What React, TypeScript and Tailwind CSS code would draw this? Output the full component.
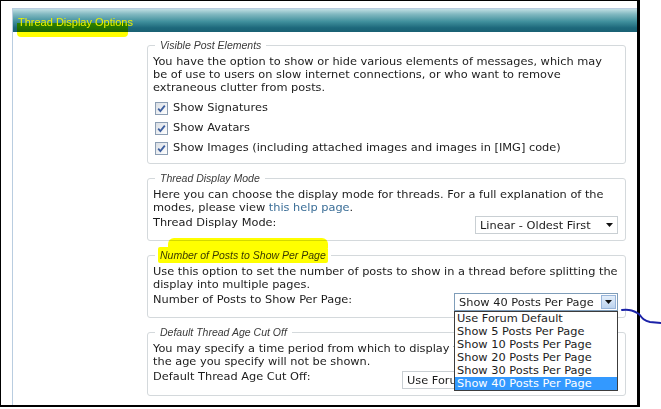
import type { ReactNode } from "react";

// ── Small pieces ──────────────────────────────────────────────────────────────

function Checkbox() {
  return (
    <span className="flex h-[13px] w-[13px] shrink-0 items-center justify-center border border-[#8b9db3] bg-gradient-to-br from-[#d9dee5] to-white">
      <svg width="9" height="9" viewBox="0 0 9 9">
        <path d="M1.2 4.6 L3.4 7 L7.8 1.6" fill="none" stroke="#3d5f9f" strokeWidth="1.8" />
      </svg>
    </span>
  );
}

function Arrow() {
  return (
    <svg width="7" height="4" viewBox="0 0 7 4">
      <path d="M0 0 H7 L3.5 4 Z" fill="#111" />
    </svg>
  );
}

function Legend({ children }: { children: ReactNode }) {
  return (
    <legend className="ml-[2px] px-[5px] font-['Liberation_Sans',Arial,sans-serif] text-[10.5px] italic leading-[14px] text-[#3a3a3a]">
      {children}
    </legend>
  );
}

function Fieldset({ legend, children }: { legend: string; children: ReactNode }) {
  return (
    <fieldset className="mb-[7px] rounded-[3px] border border-[#d4d9dc] px-[5px] pb-[6px]">
      <Legend>{legend}</Legend>
      {children}
    </fieldset>
  );
}

function Row({ label, children }: { label: string; children: ReactNode }) {
  return (
    <div className="mt-[2px] flex items-start justify-between pr-[2px]">
      <span className="leading-[13px]">{label}</span>
      {children}
    </div>
  );
}

const OPTIONS = [
  "Use Forum Default",
  "Show 5 Posts Per Page",
  "Show 10 Posts Per Page",
  "Show 20 Posts Per Page",
  "Show 30 Posts Per Page",
  "Show 40 Posts Per Page",
];

// ── Page ──────────────────────────────────────────────────────────────────────

export default function App() {
  return (
    <div className="relative h-[409px] w-[661px] overflow-hidden bg-white font-['DejaVu_Sans',Verdana,sans-serif] text-[11.35px] text-[#1c1c1c]">
      {/* black frame round the captured window */}
      <div className="h-[407px] w-[640px] overflow-hidden border-b-2 border-l border-r-[3px] border-t border-black pl-[11px] pt-[7px]">
        <div className="h-full border-l border-t border-[#b9cde0]">
          {/* header bar, with the marker stroke under its title */}
          <div className="relative h-[23px] bg-[linear-gradient(#c0dfe3,#82b9c1_22%,#3f8f9c_55%,#1d687b_82%,#1a6174)] pl-[5px] pt-[6px] font-['Liberation_Sans',Tahoma,sans-serif] text-[11px] leading-[14px] text-[#eef200]">
            <div className="absolute bottom-0 left-[4px] h-[9px] w-[111px] bg-[linear-gradient(#2f8200,#1a6300)]" />
            <span className="relative">Thread Display Options</span>
          </div>

          <div className="ml-[134px] w-[479px] pt-[6px]">
            <Fieldset legend="Visible Post Elements">
              <p className="mt-[3px] leading-[13px]">
                You have the option to show or hide various elements of messages, which may
                <br />
                be of use to users on slow internet connections, or who want to remove
                <br />
                extraneous clutter from posts.
              </p>
              <div className="mb-[-1px] mt-[4px]">
                {[
                  "Show Signatures",
                  "Show Avatars",
                  "Show Images (including attached images and images in [IMG] code)",
                ].map((t) => (
                  <label key={t} className="flex h-[20px] items-center gap-[5px] pl-[2px]">
                    <Checkbox />
                    <span>{t}</span>
                  </label>
                ))}
              </div>
            </Fieldset>

            <Fieldset legend="Thread Display Mode">
              <p className="mt-[3px] leading-[13px]">
                Here you can choose the display mode for threads. For a full explanation of the modes, please view{" "}
                <a className="text-[#3b6e97]">this help page</a>.
              </p>
              <Row label="Thread Display Mode:">
                <div className="flex h-[18px] w-[143px] items-center justify-between border border-[#c9cfd3] pl-[4px] pr-[4px]">
                  <span>Linear - Oldest First</span>
                  <Arrow />
                </div>
              </Row>
            </Fieldset>

            <Fieldset legend="Number of Posts to Show Per Page">
              <p className="mt-[3px] leading-[13px]">
                Use this option to set the number of posts to show in a thread before splitting the display into
                multiple pages.
              </p>
              <Row label="Number of Posts to Show Per Page:">
                <div className="relative z-10">
                  <div className="flex h-[18px] w-[164px] items-center justify-between border border-[#7f9db9] pl-[4px]">
                    <span>Show 40 Posts Per Page</span>
                    <span className="m-[1px] flex h-[14px] w-[15px] items-center justify-center border border-[#98b5da] bg-gradient-to-b from-[#e3eefa] to-[#bcd3ee]">
                      <Arrow />
                    </span>
                  </div>
                  {/* opened option list */}
                  <div className="absolute left-0 top-full w-full border border-[#3c3c3c] bg-white">
                    {OPTIONS.map((o, i) => (
                      <div
                        key={o}
                        className={`h-[13px] whitespace-nowrap pl-[2px] leading-[13px] ${i === OPTIONS.length - 1 ? "bg-[#3399ff] text-white" : ""}`}
                      >
                        {o}
                      </div>
                    ))}
                  </div>
                </div>
              </Row>
            </Fieldset>

            <Fieldset legend="Default Thread Age Cut Off">
              <p className="mt-[3px] leading-[13px]">
                You may specify a time period from which to display threads older than
                <br />
                the age you specify will not be shown.
              </p>
              <Row label="Default Thread Age Cut Off:">
                <div className="mt-[1px] flex h-[18px] w-[216px] items-center border border-[#c9cfd3] pl-[4px]">
                  <span>Use Forum Default</span>
                </div>
              </Row>
            </Fieldset>
          </div>
        </div>
      </div>

      {/* highlighter marks drawn over the screenshot */}
      <div className="pointer-events-none absolute left-[17px] top-[32px] h-[5px] w-[111px] rounded-b-[4px] bg-[#ffff00] mix-blend-multiply" />
      <div className="pointer-events-none absolute left-[168px] top-[238px] h-[10px] w-[160px] rounded-t-[6px] bg-[#ffff00] mix-blend-multiply" />
      <div className="pointer-events-none absolute left-[158px] top-[247px] h-[16px] w-[170px] rounded-[2px] bg-[#ffff00] mix-blend-multiply" />

      {/* pen stroke pointing at the list */}
      <svg className="pointer-events-none absolute left-0 top-0" width="661" height="409">
        <path
          d="M622 310 C 630 309, 634 311, 639 314 C 642 318, 644 321, 650 322 L 661 323"
          fill="none"
          stroke="#1b22a8"
          strokeWidth="2"
          strokeLinecap="round"
        />
      </svg>
    </div>
  );
}
